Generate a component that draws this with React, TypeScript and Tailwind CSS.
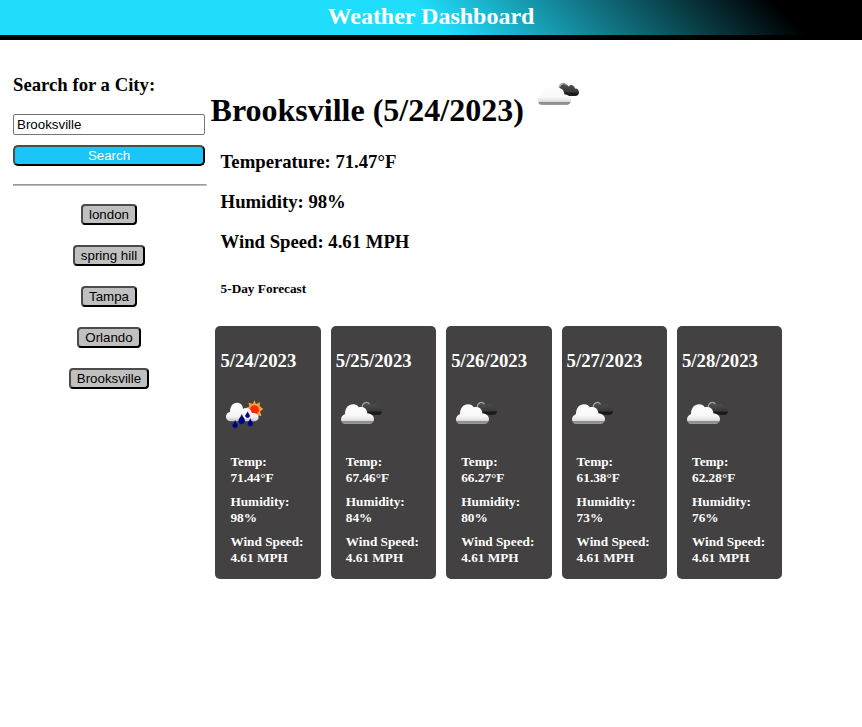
const cities = ["london", "spring hill", "Tampa", "Orlando", "Brooksville"];

const forecast = [
  { date: "5/24/2023", rain: true, temp: "71.44", humidity: "98" },
  { date: "5/25/2023", rain: false, temp: "67.46", humidity: "84" },
  { date: "5/26/2023", rain: false, temp: "66.27", humidity: "80" },
  { date: "5/27/2023", rain: false, temp: "61.38", humidity: "73" },
  { date: "5/28/2023", rain: false, temp: "62.28", humidity: "76" },
];

function Clouds({ id }: { id: string }) {
  return (
    <svg viewBox="0 0 50 50" className="block size-[50px] shrink-0">
      <defs>
        <linearGradient id={id} x1="0" y1="0" x2="0" y2="1">
          <stop offset="0" stopColor="#fff" />
          <stop offset="0.6" stopColor="#f8f8f8" />
          <stop offset="0.82" stopColor="#dedede" />
          <stop offset="0.88" stopColor="#858585" />
          <stop offset="1" stopColor="#a0a0a0" />
        </linearGradient>
        <linearGradient id={id + "-dark"} x1="0" y1="0" x2="0" y2="1">
          <stop offset="0" stopColor="#505050" />
          <stop offset="0.65" stopColor="#393939" />
          <stop offset="0.8" stopColor="#161616" />
          <stop offset="1" stopColor="#222" />
        </linearGradient>
      </defs>
      <path d="M27 22 C26 18 28 15 31 15 C33.5 15 34.8 16.2 35.5 17.5 C38 15 41 16 42 19.5 C45 19.5 46 21.5 46 23.3 C46 25.5 44.5 27 42.5 27 H30 Z" fill={`url(#${id}-dark)`} />
      <path d="M26 19.5 C26.5 14.2 31.5 13 33.5 16.2" fill="none" stroke="#a0a0a0" strokeWidth="1.2" />
      <path d="M9 36 C6.5 36 5 34 5 31.5 C5 29 6.5 27 9 26 C9 20 12.5 16.3 17 16.3 C19.8 16.3 21.7 17.6 22.7 19.3 C28 18 31 21 31.5 25.5 C35.5 25.5 38 28 38 31 C38 34 36 36 33 36 Z" fill={`url(#${id})`} />
    </svg>
  );
}

function SunnyRain() {
  return (
    <svg viewBox="0 0 50 50" className="block size-[50px] shrink-0">
      <defs>
        <radialGradient id="sun">
          <stop offset="0" stopColor="#ff2500" />
          <stop offset="0.65" stopColor="#f52d00" />
          <stop offset="1" stopColor="#ffc04a" />
        </radialGradient>
        <linearGradient id="rain-cloud" x1="0" y1="0" x2="0" y2="1">
          <stop offset="0" stopColor="#fff" />
          <stop offset="0.75" stopColor="#f3f3f3" />
          <stop offset="1" stopColor="#c4c4c4" />
        </linearGradient>
      </defs>
      <path d="M34.5 12.3 L36 16 L40 14.3 L39.6 18.3 L43.4 21 L40 23.5 L41.5 28 L37 27.5 L34.5 30 L31 28 L27 27 L28 23 L26 20 L29.3 18.5 L28.5 14.5 L32.7 16 Z" fill="#f2a13c" />
      <circle cx="34.5" cy="21.8" r="5.8" fill="url(#sun)" />
      <path d="M11 33.3 C8 33.3 6 31.3 6 28.5 C6 26.2 7.5 24.5 10 24 C10 18.5 12.7 14.7 17 14.7 C20.5 14.7 22.7 17 23 20.7 C27 19 31 20.5 31.8 25 C35.8 24.5 38.6 26.5 38.6 29.5 C38.6 32 36.5 33.3 34 33.3 Z" fill="url(#rain-cloud)" />
      <g fill="#000083" stroke="#1d2777" strokeWidth="0.4">
        <path d="M27.6 23.7 C28.3 25.5 29.8 26.5 29.8 27.8 C29.8 30.3 25.4 30.3 25.4 27.8 C25.4 26.5 26.9 25.5 27.6 23.7Z" />
        <path d="M21.8 26.3 C22.5 29.2 24.9 30.7 24.9 33 C24.9 37 18.5 37 18.5 33 C18.5 30.7 21.1 29.2 21.8 26.3Z" />
        <path d="M30.3 30.6 C30.9 33 33 34 33 35.8 C33 39 27.6 39 27.6 35.8 C27.6 34 29.7 33 30.3 30.6Z" />
        <path d="M15.2 32.3 C15.8 35 17.8 36 17.8 37.6 C17.8 40.8 12.4 40.8 12.4 37.6 C12.4 36 14.6 35 15.2 32.3Z" />
      </g>
    </svg>
  );
}

export default function App() {
  return (
    <div className="min-h-[727px] bg-white font-['Liberation_Serif','Times_New_Roman',serif] font-bold text-black">
      <header className="h-10 border-b-[5px] border-black bg-[linear-gradient(45deg,#20ddfb_50%,#000_90%)] pt-[3px] text-center text-2xl leading-[27px] text-white">
        <h1>Weather Dashboard</h1>
      </header>
      <main className="flex">
        <aside className="ml-[13px] flex w-[194px] shrink-0 flex-col pt-[34px] font-['Liberation_Sans',Arial,sans-serif] text-[13.333px] leading-[15px] font-normal">
          <h3 className="font-['Liberation_Serif','Times_New_Roman',serif] text-[18.72px] leading-[22px] font-bold">Search for a City:</h3>
          <input defaultValue="Brooksville" className="mt-[18px] h-[21px] w-48 rounded-[2px] border border-[#767676] bg-white px-[3px] outline-none" />
          <button className="mt-[10px] h-[21px] w-48 rounded-[5px] border-2 border-t-[#4c4c4c] border-r-black border-b-black border-l-[#4c4c4c] bg-[#1bc5f9] text-white">Search</button>
          <hr className="mt-[18px] h-[2px] border border-t-[#9a9a9a] border-r-[#eee] border-b-[#bbb] border-l-[#9a9a9a]" />
          <div className="mt-[18px] flex w-48 flex-col items-center gap-5">
            {cities.map((city) => (
              <button key={city} className="h-[21px] rounded-[4px] border-2 border-t-[#4c4c4c] border-r-black border-b-black border-l-[#4c4c4c] bg-[#c0c0c0] px-1.5">
                {city}
              </button>
            ))}
          </div>
        </aside>
        <section className="ml-[3.6px] w-[576px] pt-[29px]">
          <div className="flex h-[61px] gap-[9px]">
            <h2 className="pt-[23px] text-[32px] leading-[37px] whitespace-nowrap">Brooksville (5/24/2023)</h2>
            <Clouds id="current" />
          </div>
          <div className="ml-[10px] flex flex-col gap-[18px] pt-[21px] text-[18.72px] leading-[22px]">
            <p>Temperature: 71.47°F</p>
            <p>Humidity: 98%</p>
            <p>Wind Speed: 4.61 MPH</p>
          </div>
          <h5 className="mt-[28px] ml-[10px] text-[13.28px] leading-[15px]">5-Day Forecast</h5>
          <div className="mt-[30px] ml-[4.8px] flex w-[567px] gap-[10px]">
            {forecast.map((day) => (
              <article key={day.date} className="h-[253px] flex-1 rounded-[5px] bg-[#434141] pt-[24px] pl-[5px] text-[13.28px] leading-4 text-white">
                <h3 className="text-[18.72px] leading-[22px]">{day.date}</h3>
                <div className="mt-[16px]">{day.rain ? <SunnyRain /> : <Clouds id={"clouds-" + day.date.replaceAll("/", "-")} />}</div>
                <div className="mt-[16px] ml-[10px] flex flex-col gap-2">
                  <p>Temp:<br />{day.temp}°F</p>
                  <p>Humidity:<br />{day.humidity}%</p>
                  <p className="whitespace-nowrap">Wind Speed:<br />4.61 MPH</p>
                </div>
              </article>
            ))}
          </div>
        </section>
      </main>
    </div>
  );
}
